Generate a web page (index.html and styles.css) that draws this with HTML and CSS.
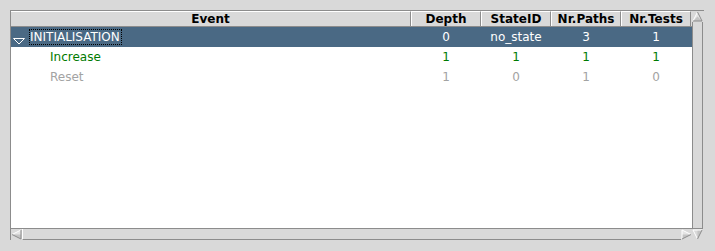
FILE: index.html
```html
<!DOCTYPE html>
<html>
<head>
<meta charset="utf-8">
<link rel="stylesheet" href="styles.css">
</head>
<body>
<div class="frame">
  <div class="tree">
    <div class="head">
      <div class="hc event">Event</div>
      <div class="hc num">Depth</div>
      <div class="hc num">StateID</div>
      <div class="hc num">Nr.Paths</div>
      <div class="hc num">Nr.Tests</div>
    </div>
    <div class="row sel">
      <div class="c event">
        <svg class="exp" width="12" height="8" viewBox="0 0 12 8"><polygon points="0.5,1.5 11.5,1.5 6,7" fill="none" stroke="#fff" stroke-width="1"/></svg>
        <span class="focus">INITIALISATION</span>
      </div>
      <div class="c num">0</div>
      <div class="c num">no_state</div>
      <div class="c num">3</div>
      <div class="c num">1</div>
    </div>
    <div class="row green">
      <div class="c event child">Increase</div>
      <div class="c num">1</div>
      <div class="c num">1</div>
      <div class="c num">1</div>
      <div class="c num">1</div>
    </div>
    <div class="row gray">
      <div class="c event child">Reset</div>
      <div class="c num">1</div>
      <div class="c num">0</div>
      <div class="c num">1</div>
      <div class="c num">0</div>
    </div>
  </div>
  <div class="vscroll">
    <div class="arrow">
      <svg width="11" height="11" viewBox="0 0 11 11"><polygon points="5.5,1 10,10 1,10" fill="#e4e4e4"/><polygon points="5.5,5.5 10,10 1,10" fill="#c4c4c4"/><polyline points="1,10 5.5,1" fill="none" stroke="#fff"/><polyline points="5.5,1 10,10 1,10" fill="none" stroke="#8c8c8c"/></svg>
    </div>
    <div class="vtrack"></div>
    <div class="arrow">
      <svg width="11" height="11" viewBox="0 0 11 11"><polygon points="1,1 10,1 5.5,10" fill="#d9d9d9"/><polygon points="5.5,1 10,1 5.5,10" fill="#c4c4c4"/><polyline points="5.5,10 1,1 10,1" fill="none" stroke="#fff"/><polyline points="10,1 5.5,10" fill="none" stroke="#8c8c8c"/></svg>
    </div>
  </div>
  <div class="hscroll">
    <div class="arrow">
      <svg width="11" height="11" viewBox="0 0 11 11"><polygon points="1,5.5 10,1 10,10" fill="#e4e4e4"/><polygon points="1,5.5 10,5.5 10,10" fill="#c4c4c4"/><polyline points="10,1 1,5.5" fill="none" stroke="#fff"/><polyline points="1,5.5 10,10 10,1" fill="none" stroke="#8c8c8c"/></svg>
    </div>
    <div class="htrack"></div>
    <div class="arrow">
      <svg width="11" height="11" viewBox="0 0 11 11"><polygon points="1,1 10,5.5 1,10" fill="#e4e4e4"/><polygon points="1,5.5 10,5.5 1,10" fill="#c4c4c4"/><polyline points="1,10 1,1 10,5.5" fill="none" stroke="#fff"/><polyline points="10,5.5 1,10" fill="none" stroke="#8c8c8c"/></svg>
    </div>
  </div>
</div>
</body>
</html>
```

FILE: styles.css
```css
html, body {
  margin: 0;
  padding: 0;
  background: #d9d9d9;
  font-family: "DejaVu Sans", sans-serif;
  font-size: 12px;
}
.frame {
  margin: 10px 0 0 10px;
  width: 693px;
  height: 229px;
  border-left: 1px solid #8c8c8c;
  border-top: 1px solid #8c8c8c;
  display: grid;
  grid-template-columns: 681px 12px;
  grid-template-rows: 217px 12px;
}
.tree {
  background: #fff;
  overflow: hidden;
}
.head {
  display: flex;
  height: 16px;
  background: #d9d9d9;
  border-bottom: 1px solid #8c8c8c;
  box-sizing: border-box;
}
.hc {
  font-weight: bold;
  text-align: center;
  line-height: 14px;
  border-top: 1px solid #fff;
  border-left: 1px solid #fff;
  border-right: 1px solid #8c8c8c;
  box-sizing: border-box;
  color: #000;
}
.hc.event { width: 400px; border-left: none; }
.hc.num { width: 70px; }
.row {
  display: flex;
  height: 20px;
  line-height: 20px;
}
.c { box-sizing: border-box; }
.c.event {
  width: 400px;
  display: flex;
  align-items: center;
}
.c.num {
  width: 70px;
  text-align: center;
}
.c.child { padding-left: 39px; }
.sel {
  background: #4a6984;
  color: #fff;
}
.exp {
  margin-left: 2px;
  margin-right: 5px;
  margin-top: 7px;
}
.focus {
  outline: 1px dotted #000;
  outline-offset: 0;
  line-height: 14px;
  padding: 0 1px 0 0;
}
.green { color: #007a00; }
.gray { color: #a3a3a3; }
.vscroll {
  grid-row: 1 / span 2;
  grid-column: 2;
  display: flex;
  flex-direction: column;
  background: #d9d9d9;
}
.vtrack {
  flex: 1;
  border-left: 1px solid #8c8c8c;
  border-right: 1px solid #8c8c8c;
  border-bottom: 1px solid #8c8c8c;
  margin: 0 1px 0 0;
}
.hscroll {
  grid-row: 2;
  grid-column: 1;
  display: flex;
  background: #d9d9d9;
  border-top: 1px solid #8c8c8c;
  box-sizing: border-box;
}
.htrack {
  flex: 1;
  border-bottom: 1px solid #8c8c8c;
  border-left: 1px solid #fff;
}
.arrow {
  width: 11px;
  height: 11px;
  line-height: 0;
}
.arrow svg { display: block; }
```
